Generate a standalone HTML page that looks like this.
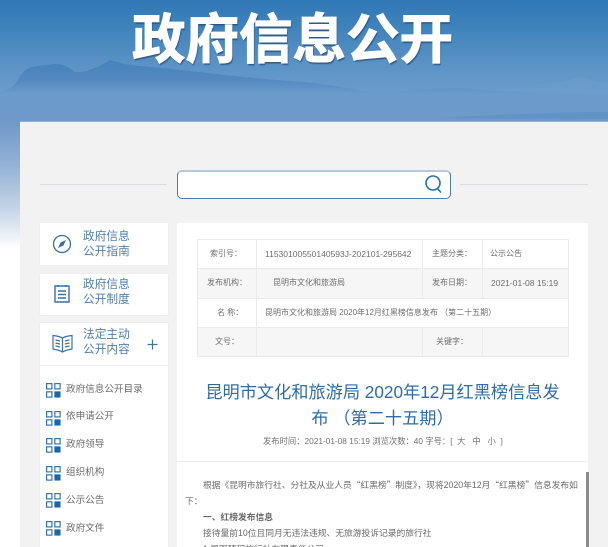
<!DOCTYPE html>
<html lang="zh"><head><meta charset="utf-8"><title>政府信息公开</title>
<style>
*{margin:0;padding:0;box-sizing:border-box}
html,body{width:608px;height:547px;overflow:hidden;background:#fff}
body{position:relative;font-family:"Liberation Sans","Noto Sans CJK SC",sans-serif;color:#666}
#w{position:absolute;left:0;top:0;width:608px;height:547px;overflow:hidden;filter:blur(.3px)}
.a{position:absolute;white-space:nowrap}
.hd{position:absolute;left:0;top:0;width:608px;height:250px;background:linear-gradient(180deg,#2f78b6 0,#3e82bb 25px,#5b93c6 65px,#6a9bcb 90px,#7099c8 122px,#8fafd3 160px,#bfd1e5 205px,#eef3f8 238px,#fff 248px)}
.panel{position:absolute;left:20px;top:122px;width:588px;height:425px;background:#f2f2f2;box-shadow:0 -1px 0 #8fb0d4}
.title{left:132px;top:9px;font-size:53.5px;line-height:64px;font-weight:bold;color:#fff;-webkit-text-stroke:1px #fff;text-shadow:1px 2px 1px rgba(40,70,110,.75)}
.line{position:absolute;height:1px;background:#d8dde2;top:184px}
.search{position:absolute;left:177px;top:170px;width:274px;height:29px;background:#fff;border:1px solid #4d7cae;border-top:2px solid #b5c9db;border-radius:5px}
.box{position:absolute;left:40px;width:128px;background:#fff;box-shadow:0 0 1px #e4e4e4}
.nav{color:#4f7fa9;font-size:11.7px;line-height:14.5px}
.li{left:66px;font-size:9.6px;line-height:14px;color:#6a6a6a}
.ic{position:absolute;left:46px;width:15px;height:15px}
.card{position:absolute;left:177px;top:223px;width:411px;height:324px;background:#fff}
.tbl{position:absolute;left:197px;top:239px;width:372px;height:118px;border:1px solid #eaeaea;background:#fff}
.s{position:absolute;background:#f6f6f6}
.h{position:absolute;background:#eaeaea;height:1px;left:0;width:370px}
.v{position:absolute;background:#eaeaea;width:1px;top:0;height:116px}
.t{font-size:8px;line-height:12px;color:#6e6e6e}
.p{font-size:8.75px;line-height:12px;color:#6a6a6a}
.q{font-family:"Noto Sans CJK SC",sans-serif}
</style></head><body><div id="w">
<div class="hd"></div>
<svg class="a" style="left:0;top:50px" width="608" height="72" viewBox="0 50 608 72">
<defs><linearGradient id="m" x1="0" y1="0" x2="0" y2="1"><stop offset="0" stop-color="#4582bb"/><stop offset=".6" stop-color="#5389c0"/><stop offset="1" stop-color="#6a9ac9"/></linearGradient></defs>
<path d="M0 92C10 90 16 85 20 76 25 68 35 65 48 65 60 62 68 66 75 72 85 73 97 68 110 60 118 62 125 65 140 66 190 70 240 78 304 82 340 86 360 90 374 93 400 92 430 88 457 88 480 89 504 92 540 93 570 94 608 95V122H0Z" fill="url(#m)"/>
<path d="M500 90 560 82 580 77 608 84V95L520 92Z" fill="#6c9dcb" opacity=".6"/>
<path d="M440 118C500 114 560 112 608 112V119C560 119 500 119 440 118Z" fill="#5a90c4" opacity=".6"/>
</svg>
<div class="a title">政府信息公开</div>
<div class="panel"></div>
<div class="line" style="left:40px;width:127px"></div>
<div class="line" style="left:460px;width:128px"></div>
<div class="search"></div>
<svg class="a" style="left:424px;top:174px" width="20" height="20" viewBox="0 0 20 20" fill="none" stroke="#2a6ea6" stroke-width="1.600"><circle cx="9" cy="9" r="7"/><path d="M13.500 14.500 16.500 18" stroke-linecap="round"/></svg>

<div class="box" style="top:223px;height:42px"></div>
<div class="box" style="top:274px;height:41px"></div>
<div class="box" style="top:323px;height:224px"></div>
<div class="a" style="left:40px;top:365px;width:128px;height:1px;background:#efefef"></div>

<svg class="a" style="left:52px;top:234px" width="20" height="20" viewBox="0 0 20 20" fill="none" stroke="#3a71a6" stroke-width="1.300"><circle cx="10" cy="10" r="8.500"/><path d="M14 6 11.500 11.500 6 14 8.500 8.500Z" fill="#3a71a6" stroke="none"/></svg>
<svg class="a" style="left:53px;top:284px" width="18" height="20" viewBox="0 0 18 20" fill="none" stroke="#3a71a6" stroke-width="1.400"><path d="M2 2H16V18H2Z"/><path d="M5 1V3M13 1V3"/><path d="M5 7H13M5 10.500H13M5 14H13"/></svg>
<svg class="a" style="left:52px;top:334px" width="21" height="19" viewBox="0 0 21 19" fill="none" stroke="#3a71a6" stroke-width="1.200"><path d="M10.500 4C7 2 4 2 1 1.500V15C4 15.500 7 16 10.500 18 14 16 17 15.500 20 15V1.500C17 2 14 2 10.500 4ZM10.500 4V18"/><path d="M3.500 6 8 7M3.500 9 8 10M3.500 12 8 13M17.500 6 13 7M17.500 9 13 10M17.500 12 13 13"/></svg>

<div class="a nav" style="left:83px;top:230px">政府信息<br>公开指南</div>
<div class="a nav" style="left:83px;top:278px">政府信息<br>公开制度</div>
<div class="a nav" style="left:83px;top:328px">法定主动<br>公开内容</div>
<svg class="a" style="left:147px;top:339px" width="11" height="11" viewBox="0 0 11 11" stroke="#3f74a8" stroke-width="1.200"><path d="M5.500 .5V10.500M.5 5.500H10.500"/></svg>

<svg width="0" height="0" style="position:absolute"><symbol id="g" viewBox="0 0 17 17"><g fill="none" stroke="#2f6ea8" stroke-width="1.300"><rect x=".7" y=".7" width="6" height="6"/><rect x="10" y=".7" width="6" height="6"/><rect x=".7" y="10" width="6" height="6"/></g><rect x="9.500" y="9.500" width="7" height="7" fill="#1a66ad"/></symbol></svg>
<svg class="ic" style="top:383px"><use href="#g"/></svg><div class="a li" style="top:383px">政府信息公开目录</div>
<svg class="ic" style="top:411px"><use href="#g"/></svg><div class="a li" style="top:410px">依申请公开</div>
<svg class="ic" style="top:438px"><use href="#g"/></svg><div class="a li" style="top:438px">政府领导</div>
<svg class="ic" style="top:466px"><use href="#g"/></svg><div class="a li" style="top:466px">组织机构</div>
<svg class="ic" style="top:493px"><use href="#g"/></svg><div class="a li" style="top:494px">公示公告</div>
<svg class="ic" style="top:521px"><use href="#g"/></svg><div class="a li" style="top:522px">政府文件</div>

<div class="card"></div>
<div class="tbl">
<div class="s" style="left:0;top:29px;width:370px;height:29px"></div>
<div class="s" style="left:0;top:88px;width:370px;height:28px"></div>
<div class="h" style="top:28px"></div><div class="h" style="top:58px"></div><div class="h" style="top:87px"></div>
<div class="v" style="left:58px"></div>
<div class="v" style="left:224px;height:58px"></div><div class="v" style="left:284px;height:58px"></div>
<div class="v" style="left:224px;top:88px;height:28px"></div><div class="v" style="left:284px;top:88px;height:28px"></div>
</div>
<div class="a t" style="left:210px;top:248px">索引号：</div>
<div class="a t" style="left:265px;top:248px;font-size:8.500px">11530100550140593J-202101-295642</div>
<div class="a t" style="left:432px;top:248px">主题分类：</div>
<div class="a t" style="left:490px;top:248px">公示公告</div>
<div class="a t" style="left:207px;top:277px">发布机构：</div>
<div class="a t" style="left:273px;top:277px">昆明市文化和旅游局</div>
<div class="a t" style="left:432px;top:277px">发布日期：</div>
<div class="a t" style="left:491px;top:277px;font-size:8.500px">2021-01-08 15:19</div>
<div class="a t" style="left:217px;top:307px">名 称：</div>
<div class="a t" style="left:265px;top:307px">昆明市文化和旅游局 2020年12月红黑榜信息发布 （第二十五期）</div>
<div class="a t" style="left:215px;top:336px">文号：</div>
<div class="a t" style="left:436px;top:336px">关键字：</div>

<div class="a" style="left:177px;top:379px;width:411px;text-align:center;font-size:17.200px;line-height:26px;color:#2f6ca3">昆明市文化和旅游局 2020年12月红黑榜信息发<br>布 （第二十五期）</div>
<div class="a" style="left:263px;top:435px;font-size:8.300px;line-height:12px;color:#707070">发布时间：2021-01-08 15:19 浏览次数：40 字号：[ &nbsp;大 &nbsp; 中 &nbsp; 小 &nbsp;]</div>
<div class="a" style="left:177px;top:461px;width:411px;height:1px;background:#ececec"></div>
<div class="a p" style="left:203px;top:479px">根据《昆明市旅行社、分社及从业人员<span class="q">“</span>红黑榜<span class="q">”</span>制度》，现将2020年12月<span class="q">“</span>红黑榜<span class="q">”</span>信息发布如</div>
<div class="a p" style="left:185px;top:495px">下：</div>
<div class="a p" style="left:203px;top:511px;font-weight:bold">一、红榜发布信息</div>
<div class="a p" style="left:203px;top:527px">接待量前10位且同月无违法违规、无旅游投诉记录的旅行社</div>
<div class="a p" style="left:203px;top:543px">1.昆明臻程旅行社有限责任公司</div>
<div class="a" style="left:586px;top:472px;width:3px;height:75px;background:#8c8c8c"></div>
</div></body></html>
